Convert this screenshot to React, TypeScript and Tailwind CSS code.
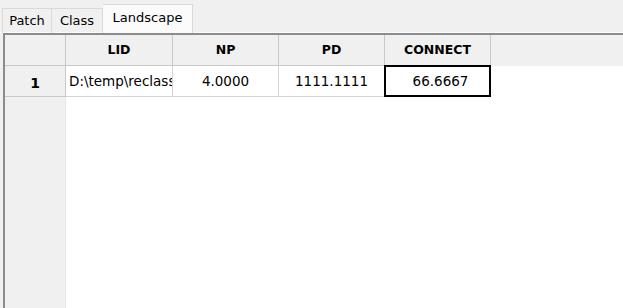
import React from "react";

const cols = ["LID", "NP", "PD", "CONNECT"];
const vals = ["D:\\temp\\reclass_patches.tif", "4.0000", "1111.1111", "66.6667"];

export default function App() {
  return (
    <div className="w-[623px] h-[308px] bg-[#f0f0f0] flex flex-col overflow-hidden font-['DejaVu_Sans',sans-serif] text-[13px] text-black leading-none">
      {/* tabs */}
      <div className="h-[33px] flex items-end pl-[2px] relative">
        <div className="absolute left-0 right-0 bottom-0 h-px bg-[#fcfcfc]" />
        <div className="relative h-[25px] w-[50px] border border-b-0 border-[#d9d9d9] flex items-center justify-center pb-[1px]">
          Patch
        </div>
        <div className="relative h-[25px] w-[51px] border border-b-0 border-l-0 border-[#d9d9d9] flex items-center justify-center pb-[1px]">
          Class
        </div>
        <div className="relative h-[29px] w-[90px] bg-[#fbfbfb] border border-b-0 border-l-0 border-[#d9d9d9] flex items-center justify-center pb-[3px]">
          Landscape
        </div>
      </div>
      {/* grid frame */}
      <div className="flex-1 ml-[3px] border-t-2 border-l-2 border-t-[#8c8c8c] border-l-[#8c8c8c] bg-white flex min-h-0">
        {/* row header column */}
        <div className="w-[61px] bg-[#f0f0f0] flex flex-col">
          <div className="h-[31px] border-r border-b border-[#c8c8c8]" />
          <div className="h-[31px] border-r border-b border-[#c8c8c8] flex items-center justify-center font-bold text-[14px] pt-[3px]">
            1
          </div>
          <div className="flex-1 border-r border-[#e6e6e6]" />
        </div>
        {/* data area */}
        <div className="flex-1 flex flex-col">
          <div className="h-[31px] flex bg-[#f0f0f0]">
            {cols.map((c, i) => (
              <div
                key={c}
                className={
                  (i === 0 ? "w-[107px] " : "w-[106px] ") +
                  "h-full border-r border-b border-[#c8c8c8] flex items-center justify-center font-bold text-[12.5px]"
                }
              >
                {c}
              </div>
            ))}
            <div className="flex-1" />
          </div>
          <div className="h-[31px] flex text-[13.5px]">
            {vals.map((v, i) => (
              <div
                key={i}
                className={
                  i === 0
                    ? "w-[107px] h-full border-r border-b border-[#d4d4d4] flex items-center pl-[3px] pt-[1px] overflow-hidden whitespace-nowrap"
                    : "w-[106px] h-full border-r border-b border-[#d4d4d4] flex items-center justify-center pt-[1px] relative"
                }
              >
                {i === 3 ? (
                  <>
                    <div className="absolute left-[-1px] top-[-1px] right-[-1px] bottom-[-1px] border-2 border-black" />
                    <span className="pl-[6px]">{v}</span>
                  </>
                ) : (
                  v
                )}
              </div>
            ))}
          </div>
          <div className="flex-1" />
        </div>
      </div>
    </div>
  );
}
